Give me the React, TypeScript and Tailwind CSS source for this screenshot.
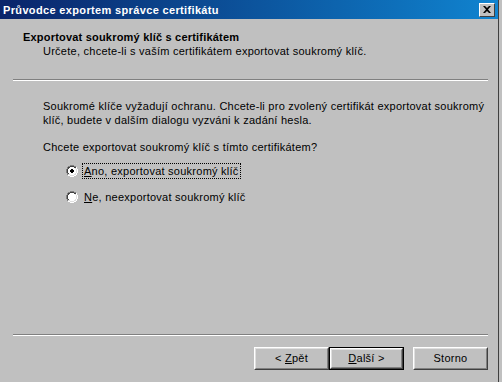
import React from "react";

const font = { fontFamily: '"Liberation Sans", Arial, sans-serif' };

function Btn({ children, isDefault }: { children: React.ReactNode; isDefault?: boolean }) {
  const inner = (
    <div className="h-full w-full border border-t-white border-l-white border-r-[#404040] border-b-[#404040]">
      <div className="h-full w-full border border-t-[#dfdfdf] border-l-[#dfdfdf] border-r-[#808080] border-b-[#808080] flex items-center justify-center text-[11px] text-black">
        <span className="whitespace-pre">{children}</span>
      </div>
    </div>
  );
  if (isDefault) {
    return <div className="w-[75px] h-[23px] border border-black">{inner}</div>;
  }
  return <div className="w-[75px] h-[23px]">{inner}</div>;
}

function Radio({ checked }: { checked?: boolean }) {
  return (
    <svg width="12" height="12" viewBox="0 0 12 12" className="shrink-0">
      <path d="M4 0h4M2 1h2M8 1h2M1 2h1M1 3h1M0 4h1M0 5h1M0 6h1M0 7h1M1 8h1M1 9h1" stroke="#808080" strokeWidth="1" transform="translate(0,0.5)" />
      <path d="M4 11h4M2 10h2M8 10h2M10 8h1M10 9h1M11 4h1M11 5h1M11 6h1M11 7h1M10 2h1M10 3h1" stroke="#ffffff" strokeWidth="1" transform="translate(0,0.5)" />
      <path d="M4 1h4M2 2h2M8 2h2M2 3h1M1 4h1M1 5h1M1 6h1M1 7h1M2 8h1" stroke="#404040" strokeWidth="1" transform="translate(0,0.5)" />
      <path d="M4 10h4M2 9h2M8 9h2M9 8h1M10 4h1M10 5h1M10 6h1M10 7h1M9 3h1" stroke="#dfdfdf" strokeWidth="1" transform="translate(0,0.5)" />
      <path d="M4 2h4M3 3h6M2 4h8M2 5h8M2 6h8M2 7h8M3 8h6M4 9h4" stroke="#ffffff" strokeWidth="1" transform="translate(0,0.5)" />
      {checked && <path d="M5 4h2M4 5h4M4 6h4M5 7h2" stroke="#000" strokeWidth="1" transform="translate(0,0.5)" />}
    </svg>
  );
}

export default function App() {
  return (
    <div className="w-[502px] h-[382px] bg-[#c0c0c0] flex overflow-hidden tracking-[0.25px]" style={font}>
      <div className="w-[498px] h-full flex flex-col">
        {/* title bar */}
        <div className="h-[19px] shrink-0 bg-gradient-to-r from-[#0a246a] to-[#1084d0] flex items-center pl-[3px] pr-[3px]">
          <span className="text-white font-bold text-[11px] leading-[14px] flex-1 tracking-[0.35px]">Průvodce exportem správce certifikátu</span>
          <div className="w-[16px] h-[14px] bg-[#c0c0c0] border border-t-white border-l-white border-r-[#404040] border-b-[#404040] flex items-center justify-center">
            <svg width="8" height="7" viewBox="0 0 8 7">
              <path d="M0 0h2l2 2 2-2h2L5 3.5 8 7H6L4 5 2 7H0l3-3.5z" fill="#000" />
            </svg>
          </div>
        </div>
        {/* header */}
        <div className="h-[60px] shrink-0 pt-[11px]">
          <div className="pl-[23px] text-[11px] leading-[14px] font-bold text-black tracking-[0.2px]">Exportovat soukromý klíč s certifikátem</div>
          <div className="pl-[43px] text-[11px] leading-[14px] text-black">Určete, chcete-li s vaším certifikátem exportovat soukromý klíč.</div>
        </div>
        <div className="ml-[13px] mr-[10px] h-[2px] shrink-0 border-t border-t-[#808080] border-b border-b-white" />
        {/* body */}
        <div className="flex-1 pl-[43px] pr-[10px] pt-[18px] text-[11px] leading-[14px] text-black">
          <p>Soukromé klíče vyžadují ochranu. Chcete-li pro zvolený certifikát exportovat soukromý klíč, budete v dalším dialogu vyzváni k zadání hesla.</p>
          <p className="mt-[13px]">Chcete exportovat soukromý klíč s tímto certifikátem?</p>
          <div className="mt-[9px] pl-[23px] flex items-center h-[16px]">
            <Radio checked />
            <span className="ml-[4px] px-[1px] h-[16px] flex items-center border border-dotted border-black"><span><u>A</u>no, exportovat soukromý klíč</span></span>
          </div>
          <div className="mt-[10px] pl-[23px] flex items-center h-[16px]">
            <Radio />
            <span className="ml-[4px] px-[1px] border border-transparent"><u>N</u>e, neexportovat soukromý klíč</span>
          </div>
        </div>
        <div className="ml-[13px] mr-[10px] h-[2px] shrink-0 border-t border-t-[#808080] border-b border-b-white" />
        <div className="h-[46px] shrink-0 pt-[11px] pr-[10px] flex justify-end items-start">
          <Btn>{"< "}<u>Z</u>pět</Btn>
          <Btn isDefault><u>D</u>alší{" >"}</Btn>
          <div className="w-[9px]" />
          <Btn>Storno</Btn>
        </div>
      </div>
      <div className="w-px h-full bg-[#404040]" />
    </div>
  );
}
